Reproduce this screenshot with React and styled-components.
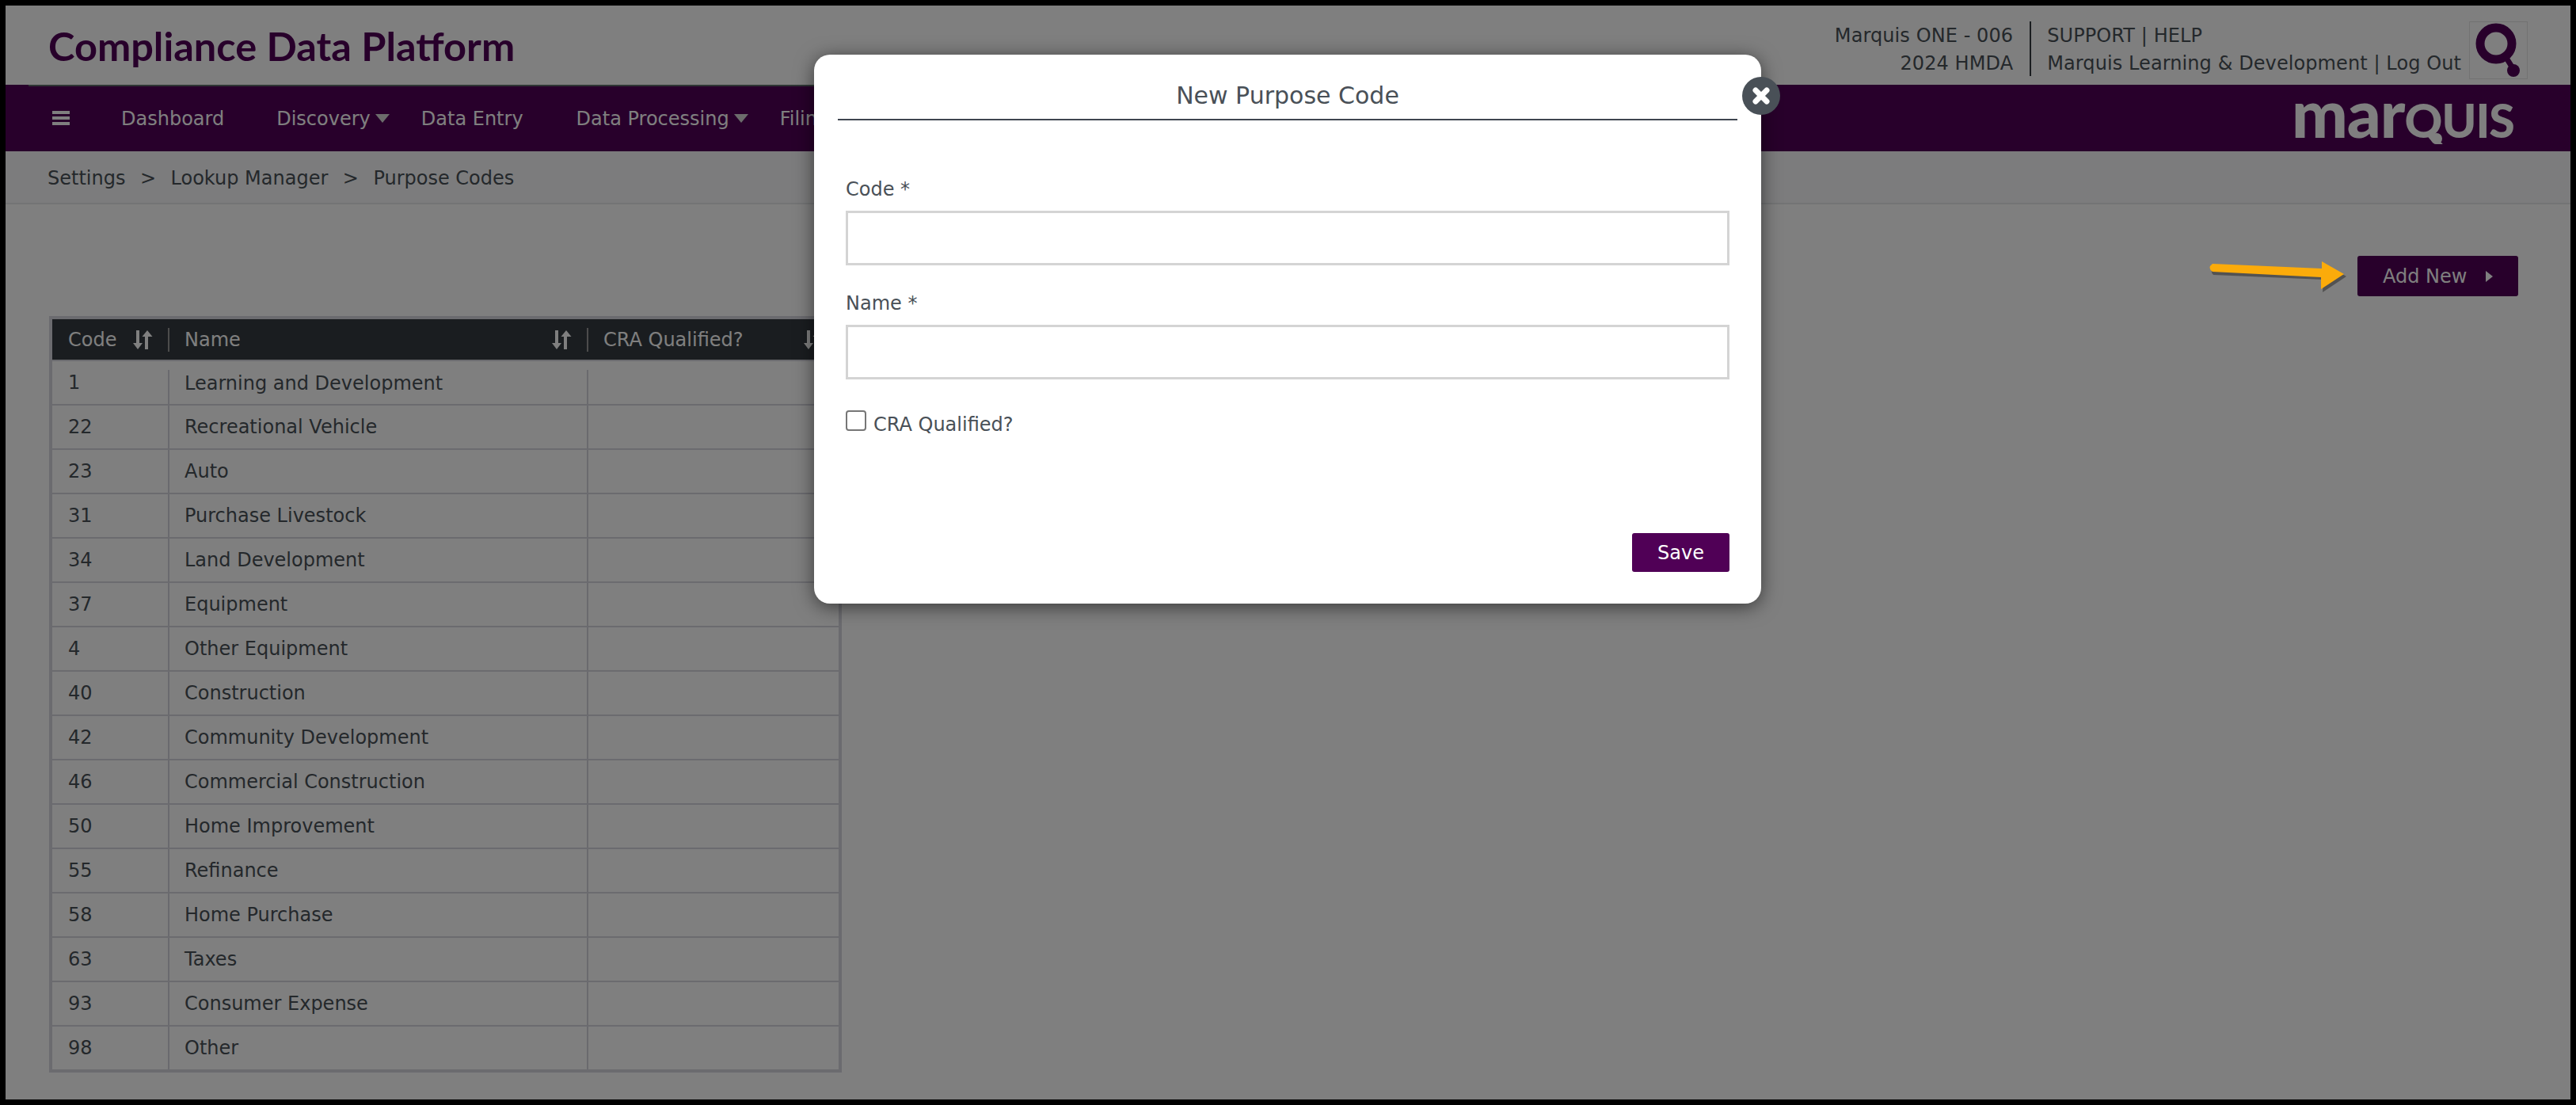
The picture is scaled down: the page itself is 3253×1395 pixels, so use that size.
import React from 'react';
import styled, { createGlobalStyle } from 'styled-components';

const Global = createGlobalStyle`
  html, body { margin: 0; padding: 0; background: #000; }
  * { box-sizing: border-box; }
`;
const SANS = `"DejaVu Sans", Verdana, sans-serif`;

const Frame = styled.div`
  position: relative; width: 3253px; height: 1395px; border: 7px solid #000;
  background: #fff; overflow: hidden; font-family: ${SANS}; color: #495057; font-size: 24px;
`;
const Overlay = styled.div`position: absolute; inset: 0; background: rgba(0,0,0,.5);`;
const TopBar = styled.header`
  height: 100px; display: flex; align-items: flex-start; justify-content: space-between;
  padding: 20px 54px 0 54px;
`;
const Title = styled.h1`
  margin: 0; font: 700 50.5px/62px Lato, sans-serif; color: #500056; white-space: nowrap;
`;
const Account = styled.div`display: flex; align-items: flex-start; line-height: 35px; letter-spacing: .09px;`;
const AccountCol = styled.div`
  display: flex; flex-direction: column; height: 69px; padding-top: 1px; text-align: ${p => p.$right ? 'right' : 'left'};
  padding-right: ${p => p.$right ? '21px' : '10px'}; padding-left: ${p => p.$right ? '0' : '20px'};
  border-right: ${p => p.$right ? '2px solid #343a40' : 'none'};
`;
const LogoBox = styled.div`width: 74px; height: 73px; border: 1px solid #e4e4e4;`;

const Nav = styled.nav`
  height: 84px; background: #500056; color: #fff; display: flex; align-items: flex-start;
  padding: 24px 72px 0 59px; position: relative; font-size: 24px; line-height: 38px;
  &::before {
    content: ''; position: absolute; left: 29px; width: 1500px; top: 0; height: 2px; background: #5e6a6a;
  }
`;
const Burger = styled.span`
  display: flex; flex-direction: column; justify-content: space-between; width: 22px; height: 18px;
  margin: 9px 65px 0 0;
  & > i { display: block; height: 4px; background: #fff; }
`;
const NavItem = styled.span`display: flex; align-items: center; margin-right: ${p => p.$gap}px;`;
const Caret = styled.span`
  display: block; width: 0; height: 0; margin-left: 6px; margin-bottom: 1px;
  border-left: 9.500px solid transparent; border-right: 9.500px solid transparent; border-top: 11px solid #d8d8d8;
`;
const Wordmark = styled.div`
  position: absolute; left: 2887px; top: 0; height: 84px; color: #fff;
  font-family: Lato, sans-serif; font-weight: 900; line-height: 70px; white-space: nowrap;
`;
const WordLower = styled.span`font-size: 84px; letter-spacing: -1px;`;
const WordUpper = styled.span`font-size: 59px; letter-spacing: -1px;`;
const Crumbs = styled.div`
  height: 67px; background: #f8f9fa; border-bottom: 2px solid #e6e8ea;
  display: flex; align-items: center; gap: 18.500px; padding: 2px 0 0 53px;
`;
const Main = styled.main`display: flex; flex-direction: column;`;
const Actions = styled.div`display: flex; justify-content: flex-end; padding: 65px 66px 25px 0;`;
const AddNew = styled.button`
  width: 203px; height: 51px; background: #500056; color: #fff; border: none; border-radius: 3px;
  font: 24px ${SANS}; display: flex; align-items: center; padding: 0 0 0 32px;
`;
const BtnCaret = styled.span`
  display: block; width: 0; height: 0; margin-left: 24px;
  border-top: 7px solid transparent; border-bottom: 7px solid transparent; border-left: 9px solid #fff;
`;
const Table = styled.div`
  margin-left: 55px; width: 1001px; border: 4px solid #d6d6de;
`;
const HeadRow = styled.div`
  display: grid; grid-template-columns: 146px 529px 1fr; height: 51px; background: #343a40; color: #fff;
  align-items: center;
`;
const HeadCell = styled.div`
  height: 30px; display: flex; align-items: center; justify-content: space-between;
  padding: 0 19px 0 ${p => p.$first ? 20 : 19}px;
  border-left: ${p => p.$first ? 'none' : '2px solid #999'};
  white-space: nowrap;
`;
const Row = styled.div`
  display: grid; grid-template-columns: 146px 529px 1fr; height: 56px;
  border-top: 2px solid #d6d6de;
`;
const Cell = styled.div`
  padding-left: ${p => p.$first ? 20 : 19}px; line-height: ${p => p.$top ? 35 : 54}px;
  margin-top: ${p => p.$top ? 11 : 0}px; margin-bottom: ${p => p.$last ? 11 : 0}px;
  border-left: ${p => p.$first ? 'none' : '2px solid #d4d4dc'};
  white-space: nowrap;
`;
const FirstColCell = styled(Cell)`line-height: 55px;`;

const Modal = styled.div`
  position: absolute; left: 1021px; top: 62px; width: 1196px; height: 693px; background: #fff;
  border-radius: 20px; box-shadow: 0 4px 24px rgba(0,0,0,.55); padding: 0 30px; color: #495057;
`;
const ModalHead = styled.div`
  height: 83px; text-align: center; font-size: 30px; line-height: 104px; border-bottom: 2px solid #3f4650;
`;
const Close = styled.div`
  position: absolute; right: -24px; top: 28px; width: 48px; height: 48px; border-radius: 50%;
  background: #495057; display: flex; align-items: center; justify-content: center;
`;
const ModalBody = styled.form`display: flex; flex-direction: column; padding: 0 10px;`;
const Label = styled.label`display: block; line-height: 30px; margin: ${p => p.$top}px 0 ${p => p.$bottom}px;`;
const Input = styled.input`
  display: block; width: 100%; height: 69px; border: 3px solid #d4d4d4; border-radius: 0; background: #fff;
`;
const CheckRow = styled.div`display: flex; align-items: flex-start; margin-top: 39px;`;
const Box = styled.span`display: block; width: 26px; height: 26px; border: 2px solid #767676; border-radius: 4px; background: #fff;`;
const CheckText = styled.span`margin-left: 9px; line-height: 30px; margin-top: 3px;`;
const Foot = styled.div`display: flex; justify-content: flex-end; margin-top: 122px;`;
const Save = styled.button`
  width: 123px; height: 49px; background: #500056; color: #fff; border: none; border-radius: 3px; font: 24px ${SANS};
`;
const ArrowSvg = styled.svg`position: absolute; left: 2776px; top: 318px;`;
const TailSvg = styled.svg`position: absolute; left: 3051px; top: 49px;`;

const Sort = () => (
  <svg width="25" height="24" viewBox="0 0 25 24" fill="#fff">
    <path d="M4 0h4v16h4l-6 8-6-8h4z" />
    <path d="M15 24h4V8h5.500l-6.500-8-6.500 8H15z" />
  </svg>
);
const rows = [['1','Learning and Development'],['22','Recreational Vehicle'],['23','Auto'],['31','Purchase Livestock'],['34','Land Development'],['37','Equipment'],['4','Other Equipment'],['40','Construction'],['42','Community Development'],['46','Commercial Construction'],['50','Home Improvement'],['55','Refinance'],['58','Home Purchase'],['63','Taxes'],['93','Consumer Expense'],['98','Other']];

export default function App() {
  return (
    <Frame>
      <Global />
      <TopBar>
        <Title>Compliance Data Platform</Title>
        <Account>
          <AccountCol $right><span>Marquis ONE - 006</span><span>2024 HMDA</span></AccountCol>
          <AccountCol><span>SUPPORT | HELP</span><span>Marquis Learning &amp; Development | Log Out</span></AccountCol>
          <LogoBox>
            <svg width="72" height="71" viewBox="0 0 72 71">
              <circle cx="33" cy="27" r="20" fill="none" stroke="#500056" strokeWidth="11" />
              <path d="M44 42 L56 61" stroke="#500056" strokeWidth="7" />
              <circle cx="55" cy="61" r="8" fill="#500056" />
            </svg>
          </LogoBox>
        </Account>
      </TopBar>
      <Nav>
        <Burger><i /><i /><i /></Burger>
        <NavItem $gap={66}>Dashboard</NavItem>
        <NavItem $gap={40}>Discovery<Caret /></NavItem>
        <NavItem $gap={67}>Data Entry</NavItem>
        <NavItem $gap={40}>Data Processing<Caret /></NavItem>
        <NavItem $gap={0}>Filing</NavItem>
        <Wordmark><WordLower>mar</WordLower><WordUpper>QUIS</WordUpper></Wordmark>
        <TailSvg width="30" height="30" viewBox="0 0 30 30"><circle cx="19" cy="19" r="7" fill="#fff" /></TailSvg>
      </Nav>
      <Crumbs><span>Settings</span><span>&gt;</span><span>Lookup Manager</span><span>&gt;</span><span>Purpose Codes</span></Crumbs>
      <Main>
        <Actions><AddNew>Add New<BtnCaret /></AddNew></Actions>
        <Table>
          <HeadRow>
            <HeadCell $first>Code<Sort /></HeadCell>
            <HeadCell>Name<Sort /></HeadCell>
            <HeadCell>CRA Qualified?<Sort /></HeadCell>
          </HeadRow>
          {rows.map((r, i) => (
            <Row key={r[0]}>
              <FirstColCell $first>{r[0]}</FirstColCell>
              <Cell $top={i === 0} $last={i === rows.length - 1}>{r[1]}</Cell>
              <Cell $top={i === 0} $last={i === rows.length - 1} />
            </Row>
          ))}
        </Table>
      </Main>
      <Overlay />
      <ArrowSvg width="190" height="50" viewBox="0 0 190 50">
        <path d="M11 9 L151 15 L151 5 L178 21 L148 41 L149 25 L10 19 Q5 14 11 9Z" fill="#000" opacity=".35" transform="translate(2 3)" />
        <path d="M11 8 L149 14 L149 5 L177 21 L148 40 L148 25 L11 18 Q4 13 11 8Z" fill="#fbab0a" />
      </ArrowSvg>
      <Modal>
        <Close>
          <svg width="28" height="28" viewBox="0 0 28 28"><path d="M7 7l14 14M21 7L7 21" stroke="#fff" strokeWidth="7" strokeLinecap="round" /></svg>
        </Close>
        <ModalHead>New Purpose Code</ModalHead>
        <ModalBody>
          <Label $top={72} $bottom={12}>Code *</Label>
          <Input />
          <Label $top={33} $bottom={12}>Name *</Label>
          <Input />
          <CheckRow><Box /><CheckText>CRA Qualified?</CheckText></CheckRow>
          <Foot><Save type="button">Save</Save></Foot>
        </ModalBody>
      </Modal>
    </Frame>
  );
}
